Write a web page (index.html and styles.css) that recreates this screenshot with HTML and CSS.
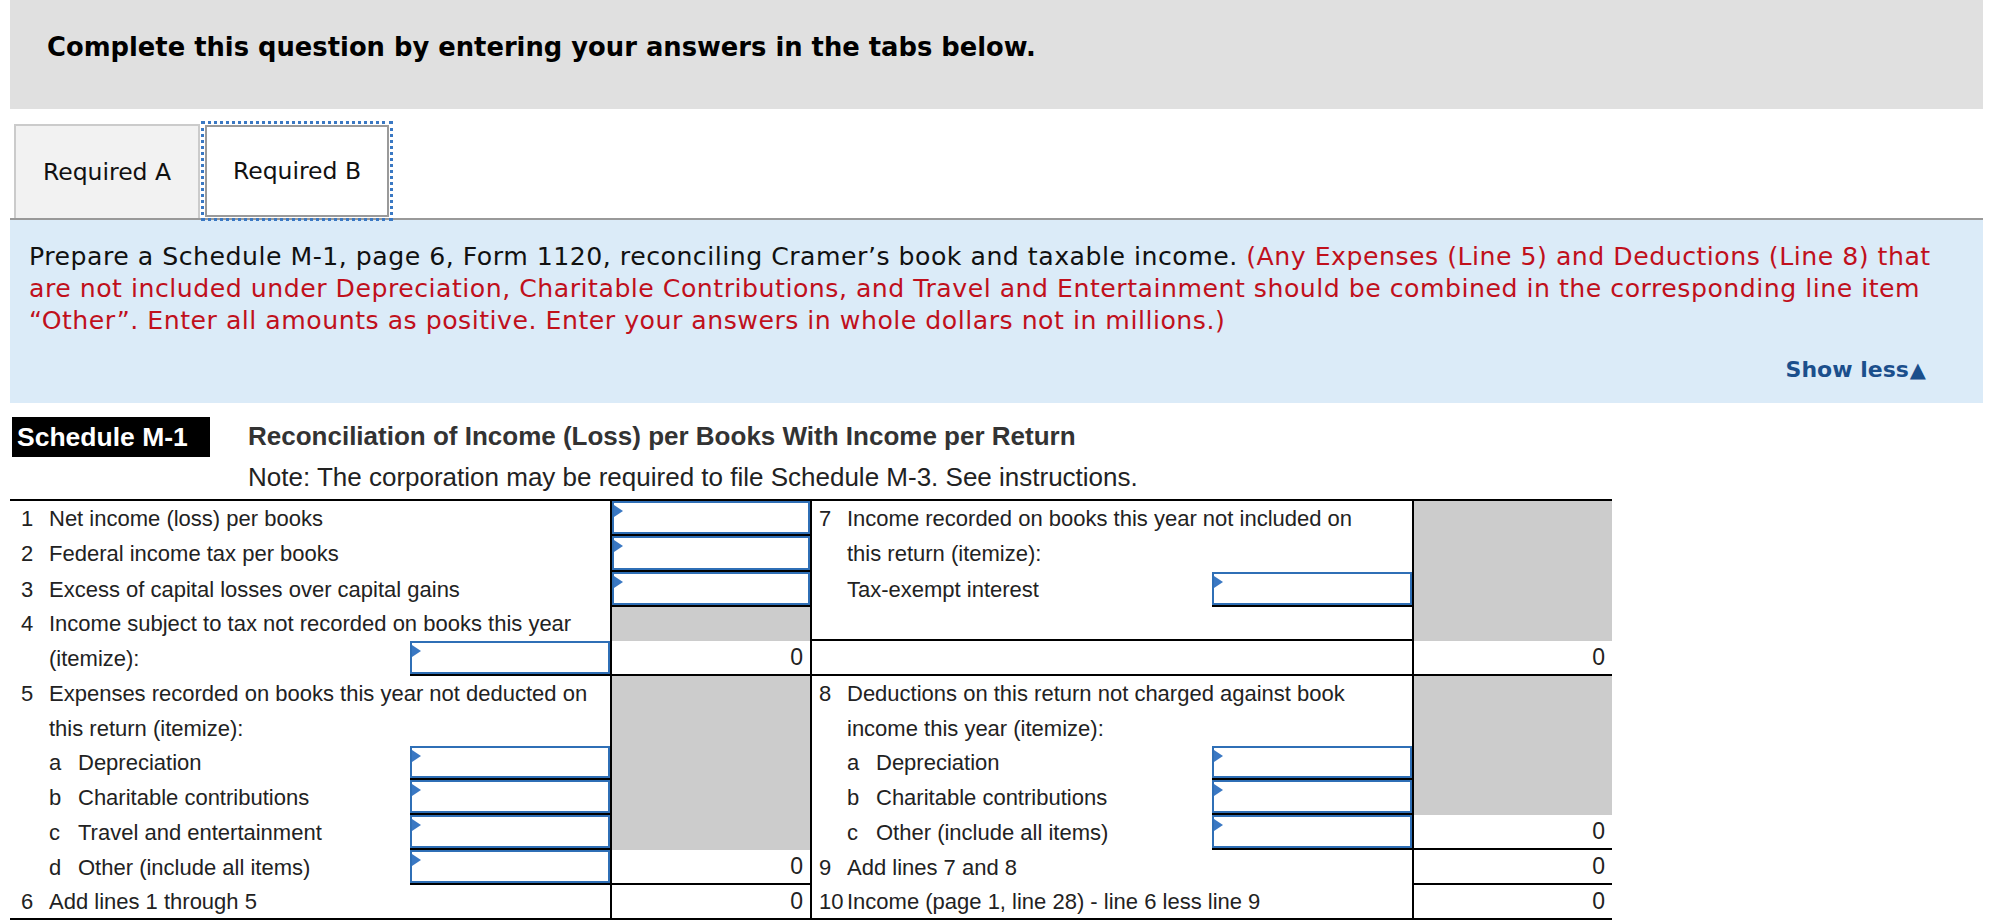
FILE: index.html
```html
<!DOCTYPE html>
<html lang="en">
<head>
<meta charset="utf-8">
<title>Schedule M-1</title>
<link rel="stylesheet" href="styles.css">
</head>
<body>
<div class="page">
  <div class="banner">Complete this question by entering your answers in the tabs below.</div>

  <div class="tabs">
    <div class="tab">Required A</div>
    <div class="tab active">Required B</div>
  </div>

  <div class="panel">
    <p class="instr">Prepare a Schedule M-1, page 6, Form 1120, reconciling Cramer’s book and taxable income. <span class="red">(Any Expenses (Line 5) and Deductions (Line 8) that are not included under Depreciation, Charitable Contributions, and Travel and Entertainment should be combined in the corresponding line item “Other”. Enter all amounts as positive. Enter your answers in whole dollars not in millions.)</span></p>
    <div class="showless">Show less<span class="tri">▲</span></div>
  </div>

  <div class="sched-head">
    <div class="badge">Schedule M-1</div>
    <div class="titles">
      <div class="title">Reconciliation of Income (Loss) per Books With Income per Return</div>
      <div class="note">Note: The corporation may be required to file Schedule M-3. See instructions.</div>
    </div>
  </div>

  <div class="m1">
    <div class="half left">
      <div class="lbl s3"><span class="num">1</span>Net income (loss) per books</div>
      <div class="in amtcol bb"><div class="box"></div></div>

      <div class="lbl s3"><span class="num">2</span>Federal income tax per books</div>
      <div class="in amtcol bb"><div class="box"></div></div>

      <div class="lbl s3"><span class="num">3</span>Excess of capital losses over capital gains</div>
      <div class="in amtcol bb"><div class="box"></div></div>

      <div class="lbl s3"><span class="num">4</span>Income subject to tax not recorded on books this year</div>
      <div class="gray amtcol"></div>

      <div class="lbl s2"><span class="num"></span>(itemize):</div>
      <div class="in bb"><div class="box"></div></div>
      <div class="amt amtcol bb">0</div>

      <div class="lbl s3"><span class="num">5</span>Expenses recorded on books this year not deducted on</div>
      <div class="gray amtcol tall5"></div>

      <div class="lbl s3"><span class="num"></span>this return (itemize):</div>

      <div class="lbl s2"><span class="num"></span><span class="let">a</span>Depreciation</div>
      <div class="in bb"><div class="box"></div></div>

      <div class="lbl s2"><span class="num"></span><span class="let">b</span>Charitable contributions</div>
      <div class="in bb"><div class="box"></div></div>

      <div class="lbl s2"><span class="num"></span><span class="let">c</span>Travel and entertainment</div>
      <div class="in bb"><div class="box"></div></div>

      <div class="lbl s2"><span class="num"></span><span class="let">d</span>Other (include all items)</div>
      <div class="in bb"><div class="box"></div></div>
      <div class="amt amtcol bb">0</div>

      <div class="lbl s2"><span class="num">6</span>Add lines 1 through 5</div>
      <div class="empty"></div>
      <div class="amt amtcol">0</div>
    </div>

    <div class="half right">
      <div class="lbl s3"><span class="num">7</span>Income recorded on books this year not included on</div>
      <div class="gray amtcol tall4"></div>

      <div class="lbl s3"><span class="num"></span>this return (itemize):</div>

      <div class="lbl s2"><span class="num"></span>Tax-exempt interest</div>
      <div class="in bb"><div class="box"></div></div>

      <div class="lbl s3 bb"></div>

      <div class="lbl s3 bb"></div>
      <div class="amt amtcol bb">0</div>

      <div class="lbl s3"><span class="num">8</span>Deductions on this return not charged against book</div>
      <div class="gray amtcol tall4"></div>

      <div class="lbl s3"><span class="num"></span>income this year (itemize):</div>

      <div class="lbl s2"><span class="num"></span><span class="let">a</span>Depreciation</div>
      <div class="in bb"><div class="box"></div></div>

      <div class="lbl s2"><span class="num"></span><span class="let">b</span>Charitable contributions</div>
      <div class="in bb"><div class="box"></div></div>

      <div class="lbl s2"><span class="num"></span><span class="let">c</span>Other (include all items)</div>
      <div class="in bb"><div class="box"></div></div>
      <div class="amt amtcol bb">0</div>

      <div class="lbl s3"><span class="num">9</span>Add lines 7 and 8</div>
      <div class="amt amtcol bb">0</div>

      <div class="lbl s3"><span class="num">10</span>Income (page 1, line 28) - line 6 less line 9</div>
      <div class="amt amtcol">0</div>
    </div>
  </div>
</div>
</body>
</html>
```

FILE: styles.css
```css
* { box-sizing: border-box; }

html, body {
  margin: 0;
  padding: 0;
  background: #fff;
}

.page {
  padding: 0 7px 0 10px;
  font-family: "DejaVu Sans", Verdana, sans-serif;
  color: #000;
}

/* top banner */
.banner {
  height: 109px;
  background: #e0e0e0;
  padding: 32px 0 0 37px;
  font-weight: bold;
  font-size: 25.8px;
  line-height: 30px;
}

/* tabs */
.tabs {
  display: flex;
  align-items: flex-end;
  padding-top: 15px;
  border-bottom: 2px solid #999;
}

.tab {
  width: 186px;
  height: 94px;
  margin-left: 4px;
  background: #f2f2f2;
  border: 2px solid #cbcbcb;
  border-bottom: none;
  display: flex;
  align-items: center;
  justify-content: center;
  font-size: 23.5px;
  color: #111;
}

.tab.active {
  width: 184px;
  height: 92px;
  margin-left: 5px;
  margin-bottom: 1px;
  background: #fff;
  border: 2px solid #9a9a9a;
  outline: 3px dotted #3a78c3;
  outline-offset: 1px;
}

/* instruction panel */
.panel {
  background: #dbebf8;
  padding: 21px 18px 18px 19px;
}

.instr {
  margin: 0;
  font-size: 25.2px;
  letter-spacing: 0.5px;
  line-height: 32px;
  color: #111;
}

.red { color: #c0101c; }

.showless {
  margin-top: 18px;
  text-align: right;
  padding-right: 39px;
  font-weight: bold;
  font-size: 22px;
  line-height: 30px;
  color: #1b4f8c;
}

.tri {
  font-size: 21px;
  margin-left: 1px;
}

/* schedule heading */
.sched-head {
  display: grid;
  grid-template-columns: 238px 1fr;
  margin-top: 14px;
  font-family: "Liberation Sans", Arial, sans-serif;
}

.badge {
  margin-left: 2px;
  width: 198px;
  height: 40px;
  background: #000;
  color: #fff;
  font-weight: bold;
  font-size: 26.5px;
  line-height: 40px;
  padding-left: 5px;
}

.title {
  font-weight: bold;
  font-size: 26px;
  line-height: 38px;
  color: #333;
}

.note {
  margin-top: 7px;
  font-size: 26px;
  line-height: 30px;
  color: #222;
}

/* schedule table */
.m1 {
  margin-top: 7px;
  display: flex;
  width: 1602px;
  border-top: 2px solid #000;
  border-bottom: 2px solid #000;
  font-family: "Liberation Sans", Arial, sans-serif;
  font-size: 22px;
  color: #222;
}

.half {
  display: grid;
  grid-template-columns: repeat(4, 200px);
  grid-template-rows: 35px 36px 35px 34px 35px 35px 35px 34px 35px 35px 35px 33px;
}

.half.right {
  border-left: 2px solid #000;
}

.lbl {
  display: flex;
  align-items: center;
  white-space: nowrap;
  padding-left: 11px;
}

.right .lbl { padding-left: 7px; }

.s2 { grid-column: span 2; }
.s3 { grid-column: span 3; }

.num {
  display: inline-block;
  width: 28px;
  flex: none;
}

.let {
  display: inline-block;
  width: 29px;
  flex: none;
}

.amtcol { border-left: 2px solid #000; }

.bb { border-bottom: 2px solid #000; }

.gray { background: #cccccc; }

.tall4 { grid-row: span 4; }
.tall5 { grid-row: span 5; }

.amt {
  display: flex;
  align-items: center;
  justify-content: flex-end;
  padding-right: 7px;
  font-size: 23px;
}

.in { background: #fff; }

.box {
  position: relative;
  height: 100%;
  border: 2px solid #2f6fb6;
  background: #fff;
}

.box::before {
  content: "";
  position: absolute;
  left: 0;
  top: 2px;
  border-left: 9px solid #3a78c3;
  border-top: 6px solid transparent;
  border-bottom: 6px solid transparent;
}
```
